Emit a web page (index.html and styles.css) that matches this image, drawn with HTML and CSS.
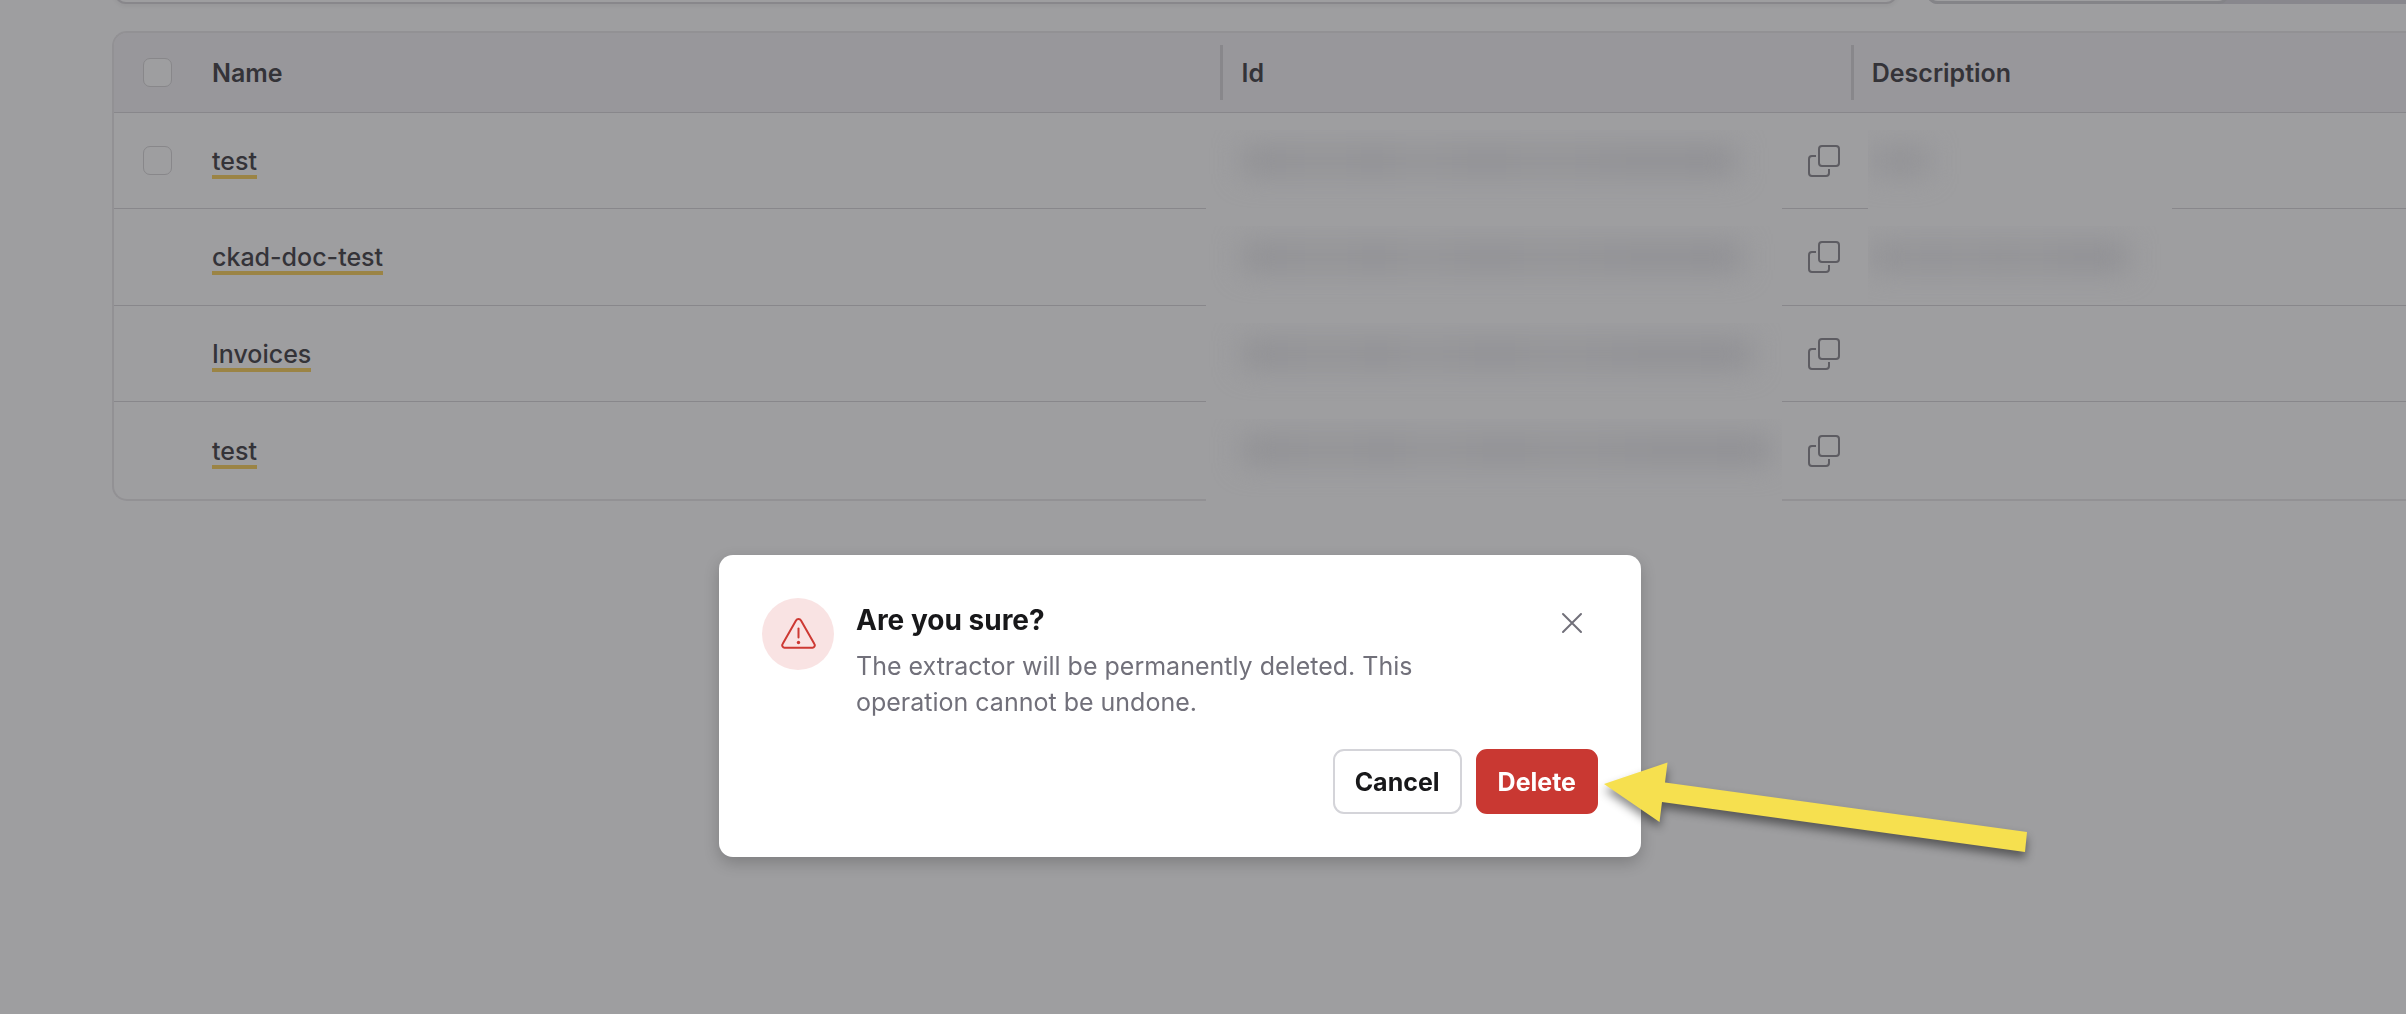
FILE: index.html
```html
<!DOCTYPE html>
<html lang="en">
<head>
    <meta charset="UTF-8">
    <meta name="viewport" content="width=device-width, initial-scale=1.0">
    <title>Extractors</title>
    <link rel="stylesheet" href="styles.css">
</head>
<body>
    <svg class="sprite" aria-hidden="true">
        <symbol id="copy" viewBox="0 0 34 34">
            <rect x="12" y="2" width="20" height="20" rx="3"/>
            <path d="M9 12H5a3 3 0 0 0-3 3v14a3 3 0 0 0 3 3h14a3 3 0 0 0 3-3v-4"/>
        </symbol>
    </svg>

    <main class="page">
        <div class="toolbar">
            <input class="search" type="text" aria-label="Search">
            <div class="toggle">
                <button class="toggle-active" type="button" aria-label="List"></button>
                <button class="toggle-item" type="button" aria-label="Grid"></button>
            </div>
        </div>

        <div class="table-card">
            <table>
                <thead>
                    <tr>
                        <th class="col-select"><input type="checkbox" aria-label="Select all"></th>
                        <th class="col-name">Name</th>
                        <th class="col-id">Id</th>
                        <th class="col-description">Description</th>
                    </tr>
                </thead>
                <tbody>
                    <tr>
                        <td class="col-select"><input type="checkbox" aria-label="Select test"></td>
                        <td><a href="#">test</a></td>
                        <td class="id-cell"><span class="redacted"></span><button class="copy" type="button" aria-label="Copy id"><svg><use href="#copy"/></svg></button></td>
                        <td class="description-cell"><span class="redacted"></span></td>
                    </tr>
                    <tr>
                        <td></td>
                        <td><a href="#">ckad-doc-test</a></td>
                        <td class="id-cell"><span class="redacted"></span><button class="copy" type="button" aria-label="Copy id"><svg><use href="#copy"/></svg></button></td>
                        <td class="description-cell"><span class="redacted"></span></td>
                    </tr>
                    <tr>
                        <td></td>
                        <td><a href="#">Invoices</a></td>
                        <td class="id-cell"><span class="redacted"></span><button class="copy" type="button" aria-label="Copy id"><svg><use href="#copy"/></svg></button></td>
                        <td></td>
                    </tr>
                    <tr>
                        <td></td>
                        <td><a href="#">test</a></td>
                        <td class="id-cell"><span class="redacted"></span><button class="copy" type="button" aria-label="Copy id"><svg><use href="#copy"/></svg></button></td>
                        <td></td>
                    </tr>
                </tbody>
            </table>
        </div>
    </main>

    <div class="overlay">
        <div class="modal" role="dialog" aria-labelledby="modal-title">
            <div class="modal-body">
                <div class="modal-icon">
                    <svg width="36" height="32" viewBox="0 0 36 32">
                        <path d="M16 2.500a2.900 2.900 0 0 1 5 0L34.400 26a2.400 2.400 0 0 1-2.200 3.700H4.800A2.400 2.400 0 0 1 2.600 26z"/>
                        <path d="M18.500 10.500v9"/>
                        <circle cx="18.500" cy="24.500" r="1.700"/>
                    </svg>
                </div>
                <div class="modal-text">
                    <h2 id="modal-title">Are you sure?</h2>
                    <p>The extractor will be permanently deleted. This operation cannot be undone.</p>
                </div>
                <button class="close" type="button" aria-label="Close">
                    <svg width="22" height="22" viewBox="0 0 22 22"><path d="M2 2l18 18M20 2l-18 18"/></svg>
                </button>
            </div>
            <div class="modal-actions">
                <button class="btn btn-cancel" type="button">Cancel</button>
                <button class="btn btn-delete" type="button">Delete</button>
            </div>
        </div>
        <svg class="arrow" width="440" height="116" viewBox="0 0 440 116">
            <path d="M4 29L67.500 7.500L65 27.500L427 77L425 97L62 47L59.500 67z"/>
        </svg>
    </div>
</body>
</html>
```
FILE: styles.css
```css
* {
    box-sizing: border-box;
}

body {
    margin: 0;
    min-height: 100vh;
    overflow: hidden;
    background-color: #9e9ea0;
    color: #343338;
    font-family: Inter, sans-serif;
    font-size: 25px;
}

button,
input {
    margin: 0;
    font: inherit;
}

.sprite {
    position: absolute;
    width: 0;
    height: 0;
}

.page {
    padding-left: 112px;
}

/* Toolbar, scrolled almost out of view */
.toolbar {
    display: flex;
    align-items: flex-end;
    gap: 28px;
    height: 4px;
    margin-bottom: 27px;
}

.search {
    flex: 1;
    height: 64px;
    margin-left: 2px;
    border: 2px solid #88878b;
    border-radius: 12px;
    background-color: #9e9ea0;
    box-shadow: 0 2px 4px rgba(0, 0, 0, 0.05);
}

.toggle {
    display: flex;
    width: 480px;
    height: 64px;
    border-radius: 12px 0 0 12px;
    background-color: #88878d;
}

.toggle button {
    border: 0;
    background: none;
}

.toggle .toggle-active {
    width: 304px;
    border: 2px solid #848488;
    border-bottom-width: 3px;
    border-radius: 12px;
    background-color: #9e9ea0;
}

/* Table */
.table-card {
    border: 2px solid #929194;
    border-right: 0;
    border-radius: 15px 0 0 15px;
}

table {
    width: 100%;
    table-layout: fixed;
    border-collapse: separate;
    border-spacing: 0;
}

th,
td {
    position: relative;
    padding: 0;
    border-bottom: 1px solid #88878b;
    text-align: left;
}

th {
    height: 80px;
    background-color: #98979b;
    font-weight: 600;
}

th:first-child {
    border-top-left-radius: 13px;
}

td {
    height: 96px;
}

tbody tr:nth-child(even) td {
    height: 97px;
}

tbody tr:last-child td {
    border-bottom: 0;
}

.col-select {
    width: 98px;
    padding-left: 29px;
}

.col-name {
    width: 44%;
}

.col-id {
    width: 27.5%;
}

.col-id,
.col-description,
.description-cell {
    padding-left: 21px;
}

.col-id::before,
.col-description::before {
    content: "";
    position: absolute;
    left: 0;
    top: 12px;
    bottom: 12px;
    width: 3px;
    background-color: #88878b;
}

input[type="checkbox"] {
    display: block;
    appearance: none;
    width: 29px;
    height: 29px;
    border: 1px solid #88878a;
    border-radius: 7px;
    background-color: #9e9ea0;
}

td a {
    display: block;
    width: fit-content;
    margin-top: 4px;
    border-bottom: 4px solid #9b8445;
    color: #343338;
    font-weight: 500;
    line-height: 28px;
    text-decoration: none;
}

.copy {
    display: block;
    width: 34px;
    height: 34px;
    margin-left: auto;
    margin-right: 10px;
    padding: 0;
    border: 0;
    background: none;
}

.copy svg {
    display: block;
    width: 34px;
    height: 34px;
    fill: none;
    stroke: #5d5c62;
    stroke-width: 2;
}

/* Blurred-out values */
.redacted {
    position: absolute;
    left: -14px;
    right: 69px;
    top: 17px;
    height: 96px;
    overflow: hidden;
    background-color: #9e9ea0;
}

.redacted::before {
    content: "";
    position: absolute;
    left: 36px;
    top: 17px;
    width: 494px;
    height: 28px;
    background: linear-gradient(90deg, #8f8f93, #949497 18%, #909094 27%, #959598 35%, #909094 50%, #949497 60%, #909094 80%, #8f8f93);
    filter: blur(14px);
}

tr:nth-child(2) .redacted::before {
    width: 500px;
}

tr:nth-child(3) .redacted::before {
    width: 510px;
}

tr:nth-child(4) .redacted::before {
    width: 528px;
}

.description-cell .redacted {
    left: 17px;
    right: auto;
    width: 304px;
}

.description-cell .redacted::before {
    left: 4px;
    width: 56px;
}

tr:nth-child(2) .description-cell .redacted {
    height: 76px;
}

tr:nth-child(2) .description-cell .redacted::before {
    width: 256px;
}

/* Confirmation dialog */
.overlay {
    position: fixed;
    inset: 0;
    display: flex;
    justify-content: center;
    align-items: flex-start;
    padding: 555px 46px 0 0;
}

.modal {
    width: 922px;
    padding: 43px;
    border-radius: 14px;
    background-color: #fff;
    box-shadow: 0 6px 16px rgba(0, 0, 0, 0.2);
}

.modal-body {
    display: flex;
    align-items: flex-start;
    gap: 22px;
}

.modal-icon {
    display: flex;
    flex: none;
    justify-content: center;
    align-items: center;
    width: 72px;
    height: 72px;
    border-radius: 50%;
    background-color: #f9e3e3;
}

.modal-icon svg {
    fill: none;
    stroke: #cd3933;
    stroke-width: 2;
    stroke-linecap: round;
}

.modal-icon circle {
    fill: #cd3933;
    stroke: none;
}

.modal-text {
    flex: 1;
    max-width: 600px;
}

.modal-text h2 {
    margin: 0 0 6px;
    color: #18181a;
    font-size: 28px;
    font-weight: 700;
    line-height: 44px;
}

.modal-text p {
    margin: 0;
    color: #71707a;
    line-height: 36px;
}

.close {
    margin: 14px 15px 0 auto;
    padding: 0;
    border: 0;
    background: none;
}

.close svg {
    display: block;
    fill: none;
    stroke: #71707a;
    stroke-width: 2;
    stroke-linecap: round;
}

.modal-actions {
    display: flex;
    justify-content: flex-end;
    gap: 14px;
    margin-top: 29px;
}

.btn {
    height: 65px;
    padding: 0 20px;
    border: 2px solid #d4d4d9;
    border-radius: 11px;
    background-color: #fff;
    color: #18181a;
    font-weight: 700;
}

.btn-delete {
    border-color: #c93832;
    background-color: #c93832;
    color: #fff;
}

.arrow {
    position: absolute;
    left: 1600px;
    top: 755px;
    overflow: visible;
    fill: #f6e04f;
    filter: drop-shadow(0 6px 5px rgba(0, 0, 0, 0.45));
}
```
